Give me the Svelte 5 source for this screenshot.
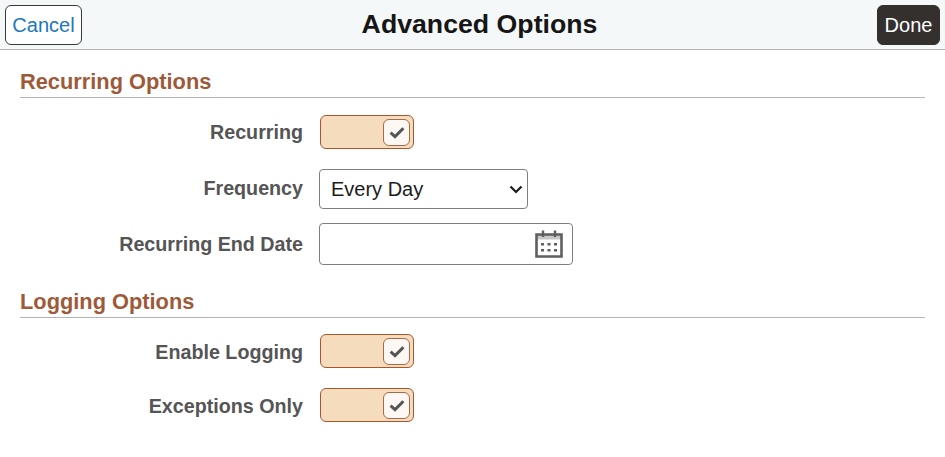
<script>
  const recurring = [
    { label: 'Recurring', kind: 'toggle' },
    { label: 'Frequency', kind: 'select' },
    { label: 'Recurring End Date', kind: 'date' }
  ];
  const logging = ['Enable Logging', 'Exceptions Only'];
</script>

{#snippet toggle()}
  <span class="toggle">
    <span class="knob">
      <svg width="16" height="13" viewBox="0 0 16 13" aria-hidden="true">
        <path d="M1.6 6.6 L6 10.6 L14.4 2.2" fill="none" stroke="#555" stroke-width="3" />
      </svg>
    </span>
  </span>
{/snippet}

<div class="page">
  <header class="bar">
    <button class="btn cancel">Cancel</button>
    <h1>Advanced Options</h1>
    <button class="btn done">Done</button>
  </header>

  <section class="first">
    <h2>Recurring Options</h2>
    <div class="rows">
      {#each recurring as row}
        <div class="row {row.kind}-row">
          <span class="label">{row.label}</span>
          {#if row.kind === 'toggle'}
            {@render toggle()}
          {:else if row.kind === 'select'}
            <span class="select-wrap">
              <select class="select"><option>Every Day</option></select>
              <svg class="chev" width="14" height="9" viewBox="0 0 14 9" aria-hidden="true">
                <path d="M1.5 1.5 L7 7 L12.5 1.5" fill="none" stroke="#1c1c1c" stroke-width="2.2" />
              </svg>
            </span>
          {:else}
            <span class="date">
              <svg width="30" height="28" viewBox="0 0 30 28" aria-hidden="true">
                <path d="M2.5 4.5 H27.5 V26.5 H2.5 Z" fill="none" stroke="#5f5f5f" stroke-width="2.6" />
                <path d="M2.5 5 H27.5 V9.5 H2.5 Z" fill="#5f5f5f" opacity="0.35" />
                <path d="M9 0.5 V7 M21 0.5 V7" stroke="#5f5f5f" stroke-width="2.4" />
                <path d="M7 13 h3 v2.6 h-3 Z M13.5 13 h3 v2.6 h-3 Z M20 13 h3 v2.6 h-3 Z M7 19 h3 v2.6 h-3 Z M13.5 19 h3 v2.6 h-3 Z M20 19 h3 v2.6 h-3 Z" fill="#5f5f5f" />
              </svg>
            </span>
          {/if}
        </div>
      {/each}
    </div>
  </section>

  <section class="second">
    <h2>Logging Options</h2>
    <div class="rows logging">
      {#each logging as label}
        <div class="row toggle-row">
          <span class="label">{label}</span>
          {@render toggle()}
        </div>
      {/each}
    </div>
  </section>
</div>

<style>
  :global(body) {
    margin: 0;
    background: #fff;
    font-family: "Liberation Sans", Arial, sans-serif;
  }
  .page {
    width: 945px;
    height: 457px;
    overflow: hidden;
  }
  .bar {
    box-sizing: border-box;
    height: 50px;
    padding: 5px 5px 4px;
    display: flex;
    justify-content: space-between;
    align-items: flex-start;
    background: #f5f8f9;
    border-bottom: 1px solid #b3b3b3;
    position: relative;
  }
  h1 {
    position: absolute;
    left: 0;
    right: 0;
    top: 9px;
    margin: 0;
    text-align: center;
    font-size: 26.7px;
    line-height: 31px;
    font-weight: 700;
    color: #161616;
    padding-left: 14px;
    box-sizing: border-box;
  }
  .btn {
    height: 40px;
    border-radius: 6px;
    font: 20px "Liberation Sans", Arial, sans-serif;
    padding: 0;
    position: relative;
    z-index: 1;
  }
  .cancel {
    width: 77px;
    background: #fff;
    color: #1a78bd;
    border: 1px solid #3c3a38;
  }
  .done {
    width: 63px;
    background: #33302d;
    color: #fff;
    border: 1px solid #33302d;
  }
  section {
    margin: 0 20px;
  }
  section.first { padding-top: 20px; }
  section.second { padding-top: 25px; }
  h2 {
    margin: 0;
    font-size: 21.8px;
    line-height: 24px;
    font-weight: 700;
    color: #9e5a38;
    padding-bottom: 3px;
    border-bottom: 1px solid #b3b3b3;
  }
  .row {
    display: flex;
    align-items: center;
    gap: 16px;
  }
  .rows { padding-top: 17px; }
  .rows.logging { padding-top: 16px; display: flex; flex-direction: column; gap: 20px; }
  .rows.logging .label { padding-top: 2px; }
  .select-row .label { padding-bottom: 2px; }
  .toggle-row { height: 34px; }
  .select-row { height: 40px; margin-top: 20px; }
  .date-row { height: 42px; margin-top: 14px; }
  .label {
    width: 283px;
    text-align: right;
    font-size: 19.7px;
    font-weight: 700;
    color: #555;
    flex: none;
  }
  .toggle {
    box-sizing: border-box;
    width: 94px;
    height: 34px;
    margin-left: 1px;
    display: flex;
    justify-content: flex-end;
    align-items: center;
    padding-right: 3px;
    background: #f5dcbc;
    border: 1px solid #a9562f;
    border-radius: 6px;
  }
  .knob {
    box-sizing: border-box;
    width: 27px;
    height: 27px;
    display: flex;
    align-items: center;
    justify-content: center;
    background: #fdf8f3;
    border: 1px solid #a8694a;
    border-radius: 6px;
  }
  .select-wrap {
    position: relative;
    display: block;
    width: 209px;
    height: 40px;
  }
  .select {
    appearance: none;
    box-sizing: border-box;
    width: 209px;
    height: 40px;
    padding: 0 6px 0 11px;
    background: #fff;
    border: 1px solid #7f7f7f;
    border-radius: 4px;
    font: 20px "Liberation Sans", Arial, sans-serif;
    color: #1c1c1c;
  }
  .chev {
    position: absolute;
    right: 5px;
    top: 16px;
    pointer-events: none;
  }
  .date {
    box-sizing: border-box;
    width: 254px;
    height: 42px;
    display: flex;
    justify-content: flex-end;
    align-items: center;
    padding-right: 8px;
    background: #fff;
    border: 1px solid #7f7f7f;
    border-radius: 4px;
  }
</style>
